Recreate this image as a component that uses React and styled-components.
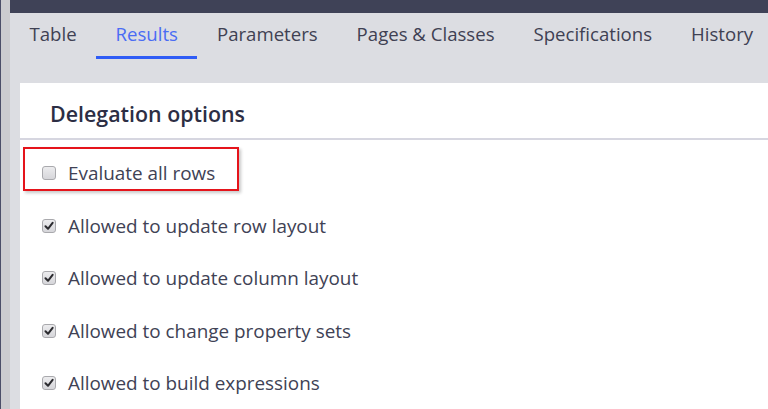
import React from "react";
import styled, { createGlobalStyle } from "styled-components";

const Global = createGlobalStyle`
  html, body { margin: 0; padding: 0; height: 100%; overflow: hidden; }
  body { font-family: "Open Sans", "Noto Sans", sans-serif; background: #dcdde2; }
  #root { height: 100%; }
`;

const Page = styled.div`
  display: flex;
  width: 768px;
  height: 409px;
  overflow: hidden;
`;

const LeftEdge = styled.div`
  flex: 0 0 9px;
  background: #cbcbcf;
  border-left: 1px solid #4b4e68;
`;

const Main = styled.div`
  flex: 1;
  display: flex;
  flex-direction: column;
  background: #dcdde2;
  min-width: 0;
`;

const TopBar = styled.div`
  flex: 0 0 13px;
  background: #3f4257;
`;

const TabBar = styled.nav`
  flex: 0 0 70px;
  display: flex;
  align-items: flex-start;
  white-space: nowrap;
`;

const Tab = styled.div`
  padding: 8px 19.5px 9px;
  font-size: 18.6px;
  line-height: 26px;
  color: ${(p) => (p.$active ? "#4a6cf4" : "#3f4153")};
  border-bottom: 3px solid ${(p) => (p.$active ? "#2f5cf6" : "transparent")};
`;

const Content = styled.div`
  flex: 1;
  display: flex;
  padding-left: 10px;
`;

const Panel = styled.section`
  flex: 1;
  background: #ffffff;
  display: flex;
  flex-direction: column;
`;

const Heading = styled.h2`
  margin: 0;
  padding: 17px 0 10px 30px;
  font-size: 21.4px;
  line-height: 28px;
  font-weight: 600;
  color: #2c2e44;
  border-bottom: 2px solid #d6d6e0;
`;

const List = styled.div`
  display: flex;
  flex-direction: column;
  padding-top: 7px;
`;

const Row = styled.label`
  position: relative;
  display: flex;
  align-items: center;
  gap: 12px;
  height: 52.5px;
  padding-left: 22px;
  font-size: 18.9px;
  color: #404255;

  ${(p) =>
    p.$highlighted &&
    `
    &::before {
      content: "";
      position: absolute;
      left: 3px;
      top: 0;
      width: 212px;
      height: 40px;
      border: 2px solid #e5141b;
      box-shadow: 2px 2px 3px rgba(0, 0, 0, 0.22);
      pointer-events: none;
    }
  `}
`;

const Box = styled.span`
  flex: 0 0 auto;
  box-sizing: border-box;
  width: 14px;
  height: 14px;
  border: 1px solid #a9a9ad;
  border-radius: 3px;
  background: linear-gradient(#ececee, #d6d6da);
  display: flex;
  align-items: center;
  justify-content: center;
`;

const Checkbox = ({ checked }) => (
  <Box>
    {checked && (
      <svg width="10" height="10" viewBox="0 0 10 10">
        <path d="M1.5 5.2 L4 7.8 L8.6 1.8" fill="none" stroke="#2b2b2f" strokeWidth="2" strokeLinecap="round" strokeLinejoin="round" />
      </svg>
    )}
  </Box>
);

const tabs = ["Table", "Results", "Parameters", "Pages & Classes", "Specifications", "History"];

const options = [
  { label: "Evaluate all rows", checked: false, highlighted: true },
  { label: "Allowed to update row layout", checked: true },
  { label: "Allowed to update column layout", checked: true },
  { label: "Allowed to change property sets", checked: true },
  { label: "Allowed to build expressions", checked: true },
];

export default function App() {
  return (
    <>
      <Global />
      <Page>
        <LeftEdge />
        <Main>
          <TopBar />
          <TabBar>
            {tabs.map((t) => (
              <Tab key={t} $active={t === "Results"}>
                {t}
              </Tab>
            ))}
          </TabBar>
          <Content>
            <Panel>
              <Heading>Delegation options</Heading>
              <List>
                {options.map((o) => (
                  <Row key={o.label} $highlighted={o.highlighted}>
                    <Checkbox checked={o.checked} />
                    <span>{o.label}</span>
                  </Row>
                ))}
              </List>
            </Panel>
          </Content>
        </Main>
      </Page>
    </>
  );
}
